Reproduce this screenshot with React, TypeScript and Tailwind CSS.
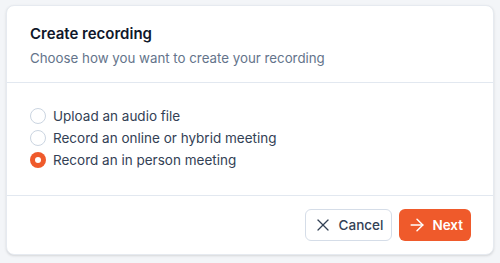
import { X, ArrowRight } from 'lucide-react'

const options = [
  { id: 'upload', label: 'Upload an audio file' },
  { id: 'online', label: 'Record an online or hybrid meeting' },
  { id: 'person', label: 'Record an in person meeting' },
]

export default function App() {
  const selected = 'person'

  return (
    <div className="min-h-[263px] bg-[#f3f5f8] px-[6px] pt-[5px] pb-2 font-['Inter',sans-serif]">
      <div className="flex h-[250px] flex-col rounded-lg border border-[#e6eaf0] bg-white shadow-sm">
        <div className="border-b border-[#e2e8f0] px-[23px] pt-[16px] pb-[14px]">
          <h2 className="text-[15px] font-semibold leading-6 text-[#0f172a]">Create recording</h2>
          <p className="mt-[2px] text-[13.3px] leading-5 text-[#64748b]">Choose how you want to create your recording</p>
        </div>

        <div className="flex flex-col gap-[4px] border-b border-[#e2e8f0] px-[23px] pt-[24px] pb-[26px]">
          {options.map((option) => (
            <label key={option.id} className="flex h-[18px] items-center gap-[7px]">
              {option.id === selected ? (
                <span className="flex size-4 items-center justify-center rounded-full bg-[#ef5a2b]">
                  <span className="size-[6px] rounded-full bg-white" />
                </span>
              ) : (
                <span className="size-4 rounded-full border border-[#cbd5e1] bg-white" />
              )}
              <span className="text-[13.5px] text-[#334155]">{option.label}</span>
            </label>
          ))}
        </div>

        <div className="flex flex-1 items-center justify-end gap-[7px] px-[22px]">
          <button className="flex h-8 items-center gap-[6px] rounded-md border border-[#d5dde8] bg-white pl-[7px] pr-[8px] text-[13.5px] font-medium text-[#334155]">
            <X size={20} strokeWidth={1.5} />
            Cancel
          </button>
          <button className="flex h-8 items-center gap-[5px] rounded-md bg-[#ef5a2b] pl-[8px] pr-[8px] text-[13.5px] font-semibold text-white">
            <ArrowRight size={20} strokeWidth={1.75} />
            Next
          </button>
        </div>
      </div>
    </div>
  )
}
